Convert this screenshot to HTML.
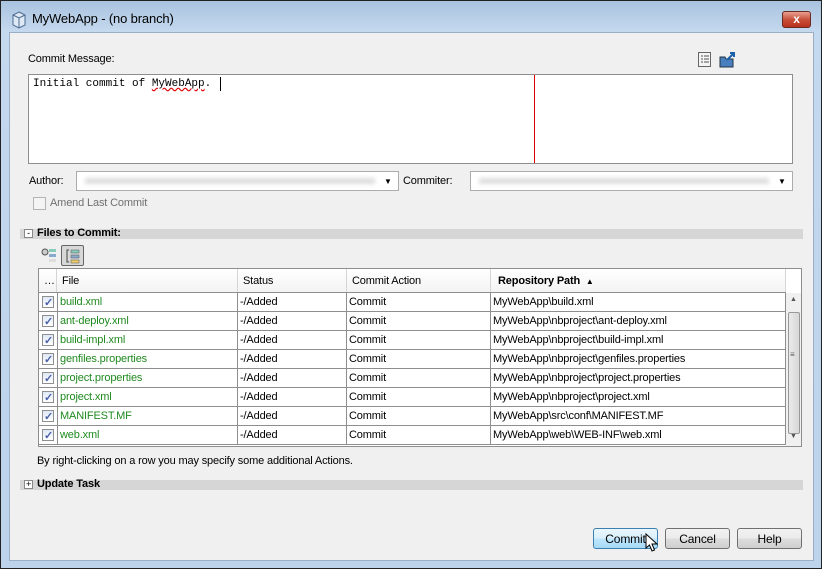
<!DOCTYPE html>
<html><head><style>
*{margin:0;padding:0;box-sizing:border-box}
body{width:822px;height:569px;position:relative;overflow:hidden;font-family:"Liberation Sans",sans-serif;font-size:11px;letter-spacing:-0.15px;color:#000;background:#b9d1ea}
.a{position:absolute}
.frame{left:0;top:0;width:822px;height:569px;border:1px solid #222;background:linear-gradient(#a9c3df,#c4d8ee 30px,#bcd3eb)}
.content{left:9px;top:32px;width:805px;height:529px;background:#f0f0f0;border:1px solid #9aaec6}
.btn{border:1px solid #707070;border-radius:3px;background:linear-gradient(#f2f2f2,#ebebeb 50%,#dddddd 51%,#cfcfcf);text-align:center;line-height:20px;font-size:12px}
.hdr{top:269px;height:24px;border-right:1px solid #d5d5d5;background:linear-gradient(#fff,#f3f3f3);line-height:24px;padding-left:5px}
.row{left:39px;width:747px;height:19px;border-bottom:1px solid #8e8e8e;background:#fff}
.row div{position:absolute;top:0;height:19px;line-height:19px;border-right:1px solid #8e8e8e;padding-left:2px;white-space:nowrap}
.cb{width:12px;height:12px;border:1px solid #8f8f8f;background:linear-gradient(#dfe8f5,#fff);top:3px!important;left:3px;height:12px!important;padding:0!important}
.cb::after{content:"✓";position:absolute;left:1px;top:-3px;font-size:11px;color:#4a5fa8;font-weight:bold}
.g{color:#1f8a1f}
</style></head><body>
<div class="a frame"></div>
<svg class="a" style="left:11px;top:11px" width="16" height="18" viewBox="0 0 16 18"><path d="M8 1 L14 4 L14 14 L8 17 L2 14 L2 4Z" fill="#dfe9f5" stroke="#4a6a90"/><path d="M2 4 L8 7 L14 4 M8 7 L8 17" fill="none" stroke="#4a6a90"/></svg>
<div class="a" style="left:32px;top:11px;font-size:13px;color:#000">MyWebApp - (no branch)</div>
<div class="a" style="left:782px;top:11px;width:29px;height:17px;border:1px solid #6b2a22;border-radius:3px;background:linear-gradient(#e8a090,#c8503c 50%,#b8321e);color:#fff;font-weight:bold;text-align:center;line-height:15px;font-size:12px">x</div>
<div class="a content"></div>
<div class="a" style="left:28px;top:53px">Commit Message:</div>
<svg class="a" style="left:698px;top:52px" width="14" height="16"><rect x="0.5" y="0.5" width="12" height="14" fill="#f4f4f4" stroke="#666"/><path d="M3 4h2M6 4h5M3 7h2M6 7h5M3 10h2M6 10h5" stroke="#555"/></svg>
<svg class="a" style="left:719px;top:51px" width="18" height="17"><path d="M1 6h5l1 2h7v8H1z" fill="#4a7fbf" stroke="#234"/><path d="M8 9L15 2M11 2h4v4" stroke="#1a5fa8" stroke-width="2" fill="none"/></svg>
<div class="a" style="left:28px;top:74px;width:765px;height:90px;background:#fff;border:1px solid #8e8e8e"></div>
<div class="a" style="left:534px;top:75px;width:1px;height:88px;background:#e00000"></div>
<div class="a" style="left:33px;top:78px;font-family:'Liberation Mono',monospace;font-size:11px;letter-spacing:0">Initial commit of <span style="text-decoration:underline wavy #e00000">MyWebApp</span>.</div>
<div class="a" style="left:220px;top:77px;width:1px;height:14px;background:#000"></div>
<div class="a" style="left:29px;top:175px">Author:</div>
<div class="a" style="left:76px;top:171px;width:323px;height:20px;background:#fff;border:1px solid #acacac"><div style="margin:6px 8px;width:290px;height:6px;background:#ddd;filter:blur(2px)"></div></div>
<div class="a" style="left:384px;top:177px;font-size:8px">▼</div>
<div class="a" style="left:403px;top:175px">Commiter:</div>
<div class="a" style="left:470px;top:171px;width:323px;height:20px;background:#fff;border:1px solid #acacac"><div style="margin:6px 8px;width:290px;height:6px;background:#ddd;filter:blur(2px)"></div></div>
<div class="a" style="left:778px;top:177px;font-size:8px">▼</div>
<div class="a" style="left:33px;top:197px;width:13px;height:13px;border:1px solid #b5b5b5;background:#f4f4f4"></div>
<div class="a" style="left:50px;top:197px;color:#707070">Amend Last Commit</div>
<div class="a" style="left:20px;top:229px;width:783px;height:10px;background:#d6d6d6"></div>
<div class="a" style="left:24px;top:229px;width:9px;height:9px;border:1px solid #888;background:#fff;font-size:9px;line-height:6px;text-align:center">-</div>
<div class="a" style="left:37px;top:227px;font-weight:bold">Files to Commit:</div>
<svg class="a" style="left:41px;top:247px" width="16" height="16"><circle cx="4" cy="5" r="3" fill="#ccc" stroke="#555"/><rect x="8" y="2" width="7" height="3" fill="#8cb"/><rect x="8" y="7" width="7" height="3" fill="#8ac"/><rect x="8" y="12" width="7" height="3" fill="#ddd"/></svg>
<div class="a" style="left:61px;top:245px;width:23px;height:21px;border:1px solid #666;border-radius:2px;background:#d8d8d8"></div>
<svg class="a" style="left:65px;top:248px" width="16" height="16"><path d="M4 2H2v12h2" fill="none" stroke="#444"/><rect x="6" y="2" width="8" height="3" fill="#8cb" stroke="#555" stroke-width=".5"/><rect x="6" y="7" width="8" height="3" fill="#8ac" stroke="#555" stroke-width=".5"/><rect x="6" y="12" width="8" height="3" fill="#ec6" stroke="#555" stroke-width=".5"/></svg>
<div class="a" style="left:38px;top:268px;width:764px;height:179px;border:1px solid #8e8e8e;background:#fff"></div>
<div class="a hdr" style="left:39px;width:18px">…</div>
<div class="a hdr" style="left:57px;width:181px">File</div>
<div class="a hdr" style="left:238px;width:109px">Status</div>
<div class="a hdr" style="left:347px;width:144px">Commit Action</div>
<div class="a hdr" style="left:491px;width:295px;font-weight:bold;padding-left:7px">Repository Path &nbsp;<span style="font-size:8px">▲</span></div>
<div class="a" style="left:39px;top:292px;width:747px;height:1px;background:#8e8e8e"></div>
<div class="a" style="left:786px;top:293px;width:15px;height:153px;background:#f0f0f0"></div>
<div class="a" style="left:788px;top:312px;width:12px;height:122px;border:1px solid #999;border-radius:2px;background:linear-gradient(90deg,#eaeaea,#d8d8d8)"></div>
<div class="a" style="left:790px;top:296px;font-size:7px;color:#555">▲</div>
<div class="a" style="left:790px;top:433px;font-size:7px;color:#555">▼</div>
<div class="a" style="left:790px;top:350px;font-size:8px;color:#555">≡</div>

<div class="a row" style="top:293px"><div class="cb"></div><div class="g" style="left:18px;width:181px;border-left:1px solid #8e8e8e">build.xml</div><div style="left:199px;width:109px">-/Added</div><div style="left:308px;width:144px">Commit</div><div style="left:452px;width:295px">MyWebApp\build.xml</div></div>
<div class="a row" style="top:312px"><div class="cb"></div><div class="g" style="left:18px;width:181px;border-left:1px solid #8e8e8e">ant-deploy.xml</div><div style="left:199px;width:109px">-/Added</div><div style="left:308px;width:144px">Commit</div><div style="left:452px;width:295px">MyWebApp\nbproject\ant-deploy.xml</div></div>
<div class="a row" style="top:331px"><div class="cb"></div><div class="g" style="left:18px;width:181px;border-left:1px solid #8e8e8e">build-impl.xml</div><div style="left:199px;width:109px">-/Added</div><div style="left:308px;width:144px">Commit</div><div style="left:452px;width:295px">MyWebApp\nbproject\build-impl.xml</div></div>
<div class="a row" style="top:350px"><div class="cb"></div><div class="g" style="left:18px;width:181px;border-left:1px solid #8e8e8e">genfiles.properties</div><div style="left:199px;width:109px">-/Added</div><div style="left:308px;width:144px">Commit</div><div style="left:452px;width:295px">MyWebApp\nbproject\genfiles.properties</div></div>
<div class="a row" style="top:369px"><div class="cb"></div><div class="g" style="left:18px;width:181px;border-left:1px solid #8e8e8e">project.properties</div><div style="left:199px;width:109px">-/Added</div><div style="left:308px;width:144px">Commit</div><div style="left:452px;width:295px">MyWebApp\nbproject\project.properties</div></div>
<div class="a row" style="top:388px"><div class="cb"></div><div class="g" style="left:18px;width:181px;border-left:1px solid #8e8e8e">project.xml</div><div style="left:199px;width:109px">-/Added</div><div style="left:308px;width:144px">Commit</div><div style="left:452px;width:295px">MyWebApp\nbproject\project.xml</div></div>
<div class="a row" style="top:407px"><div class="cb"></div><div class="g" style="left:18px;width:181px;border-left:1px solid #8e8e8e">MANIFEST.MF</div><div style="left:199px;width:109px">-/Added</div><div style="left:308px;width:144px">Commit</div><div style="left:452px;width:295px">MyWebApp\src\conf\MANIFEST.MF</div></div>
<div class="a row" style="top:426px"><div class="cb"></div><div class="g" style="left:18px;width:181px;border-left:1px solid #8e8e8e">web.xml</div><div style="left:199px;width:109px">-/Added</div><div style="left:308px;width:144px">Commit</div><div style="left:452px;width:295px">MyWebApp\web\WEB-INF\web.xml</div></div>

<div class="a" style="left:37px;top:455px">By right-clicking on a row you may specify some additional Actions.</div>
<div class="a" style="left:20px;top:480px;width:783px;height:10px;background:#d6d6d6"></div>
<div class="a" style="left:24px;top:480px;width:9px;height:9px;border:1px solid #888;background:#fff;font-size:9px;line-height:7px;text-align:center">+</div>
<div class="a" style="left:37px;top:478px;font-weight:bold">Update Task</div>
<div class="a btn" style="left:593px;top:528px;width:65px;height:21px;border-color:#3c7fb1;background:linear-gradient(#eaf6fd,#d9f0fc 50%,#bee6fd 51%,#a7d9f5)">Commit</div>
<div class="a btn" style="left:665px;top:528px;width:65px;height:21px">Cancel</div>
<div class="a btn" style="left:737px;top:528px;width:65px;height:21px">Help</div>
<svg class="a" style="left:645px;top:533px" width="14" height="20"><path d="M1 1V15L4.5 12L7 18L9.5 17L7 11H12Z" fill="#fff" stroke="#000"/></svg>
</body></html>
